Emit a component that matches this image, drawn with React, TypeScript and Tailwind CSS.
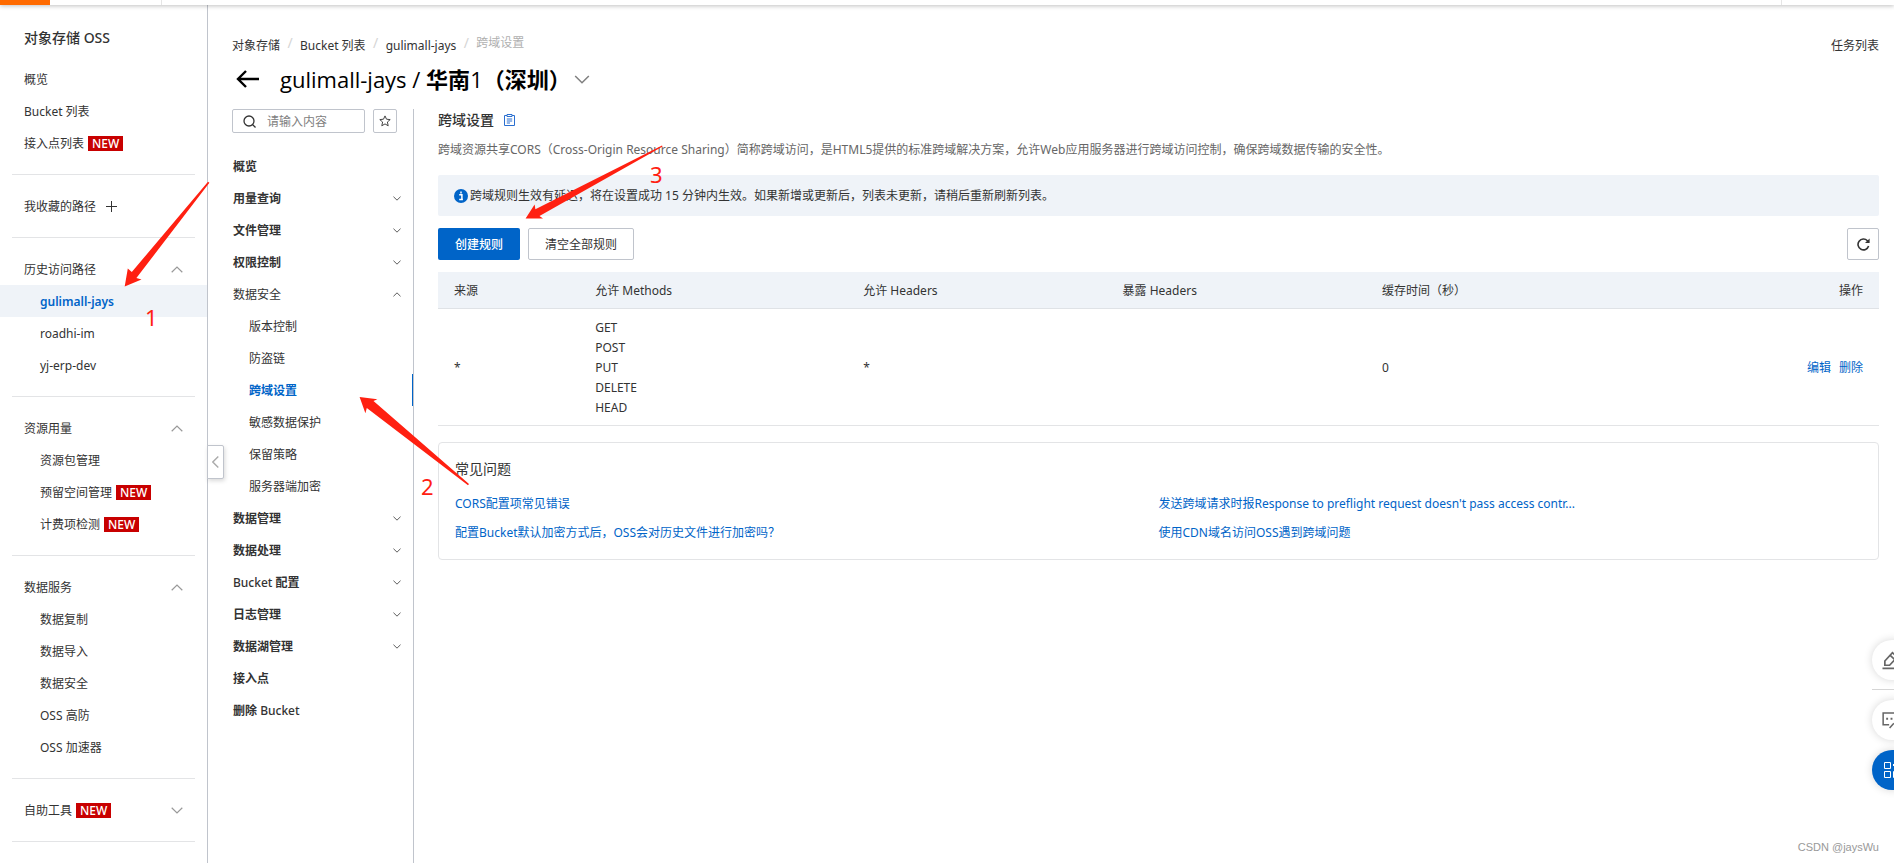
import type { ReactNode } from "react";

type IconProps = { className?: string };

function Chevron({ className = "" }: IconProps) {
  return (
    <svg viewBox="0 0 12 7" fill="none" stroke="currentColor" strokeWidth="1.2" className={className} aria-hidden="true">
      <path d="M0.7 0.8 6 6 11.3 0.8" />
    </svg>
  );
}

/* Chinese runs are set bold, Latin runs keep the surrounding weight. */
function MixedBold({ text }: { text: string }) {
  return (
    <span className="whitespace-pre">
      {text.split(/([\x20-\x7e]+)/).map((part, i) => (i % 2 ? part : <b key={i} className="font-bold">{part}</b>))}
    </span>
  );
}

function NewBadge() {
  return <span className="ml-1 bg-[#c80000] px-1 text-xs leading-[15px] font-medium text-white">NEW</span>;
}

function SideLink({ label, indent = false, active = false, badge = false }: { label: string; indent?: boolean; active?: boolean; badge?: boolean }) {
  return (
    <a
      href="#"
      className={`flex h-8 items-center pt-px ${indent ? "pl-10" : "pl-6"} ${active ? "bg-[#eff3f8] font-semibold text-[#0064c8]" : ""}`}
    >
      {label}
      {badge && <NewBadge />}
    </a>
  );
}

function SideGroup({ title, open = true, badge = false, children }: { title: string; open?: boolean; badge?: boolean; children?: ReactNode }) {
  return (
    <section className="pt-[15px]">
      <button type="button" className="flex h-8 w-full items-center pt-px pr-6 pl-6 text-left">
        {title}
        {badge && <NewBadge />}
        <Chevron className={`ml-auto h-[7px] w-3 text-[#999] ${open ? "rotate-180" : ""}`} />
      </button>
      {children}
      <div className="mx-3 mt-[15px] h-px bg-[#e3e4e6]" />
    </section>
  );
}

const navItems: { label: string; kind?: "leaf" | "open" | "sub" | "current" }[] = [
  { label: "概览", kind: "leaf" },
  { label: "用量查询" },
  { label: "文件管理" },
  { label: "权限控制" },
  { label: "数据安全", kind: "open" },
  { label: "版本控制", kind: "sub" },
  { label: "防盗链", kind: "sub" },
  { label: "跨域设置", kind: "current" },
  { label: "敏感数据保护", kind: "sub" },
  { label: "保留策略", kind: "sub" },
  { label: "服务器端加密", kind: "sub" },
  { label: "数据管理" },
  { label: "数据处理" },
  { label: "Bucket 配置" },
  { label: "日志管理" },
  { label: "数据湖管理" },
  { label: "接入点", kind: "leaf" },
  { label: "删除 Bucket", kind: "leaf" },
];

function BucketNav() {
  return (
    <nav className="mt-[17px]">
      {navItems.map(({ label, kind }) => {
        if (kind === "sub" || kind === "current") {
          return (
            <a
              key={label + kind}
              href="#"
              className={`flex h-8 items-center pt-px pl-[17px] ${kind === "current" ? "border-r border-[#0064c8] font-bold text-[#0064c8]" : ""}`}
            >
              {label}
            </a>
          );
        }
        if (kind === "leaf") {
          return (
            <a key={label} href="#" className="flex h-8 items-center pt-px pl-px font-medium">
              <MixedBold text={label} />
            </a>
          );
        }
        return (
          <button
            key={label}
            type="button"
            className="flex h-8 w-full items-center justify-between pt-px pr-3 pl-px font-medium"
          >
            {kind === "open" ? <span className="font-normal">{label}</span> : <MixedBold text={label} />}
            <Chevron className={`h-[5px] w-2 text-[#333] ${kind === "open" ? "rotate-180" : ""}`} />
          </button>
        );
      })}
    </nav>
  );
}

function Annotations() {
  return (
    <div className="pointer-events-none absolute top-0 left-0 text-[22px] leading-6 text-[#ff2011]" aria-hidden="true">
      <svg width="700" height="520" viewBox="0 0 700 520" fill="#ff2011">
        <path d="M124.7 286.4 127.8 268.6 131.8 272 208 181.8 209.4 182.8 136.4 278 141.5 279.5Z" />
        <path d="M359.6 397 377.4 399.3 373.5 401 469 484 468 485.2 366.8 408 365.4 413.2Z" />
        <path d="M525.6 218.6 534.6 204.4 535.4 209.3 662 145.4 662.6 146.6 539.5 216 543 218.6Z" />
      </svg>
      <span className="absolute top-[305px] left-[145px]">1</span>
      <span className="absolute top-[474px] left-[421px]">2</span>
      <span className="absolute top-[162px] left-[650px]">3</span>
    </div>
  );
}

function FloatingTools() {
  return (
    <div className="absolute top-[640px] right-0 w-[22px]">
      <div className="w-10">
        <button type="button" aria-label="反馈" className="flex size-10 items-center justify-center rounded-full bg-white text-[#666] shadow-[0_0_8px_rgba(0,0,0,0.16)]">
          <svg className="mr-px size-[19px]" viewBox="0 0 20 20" fill="none" stroke="currentColor" strokeWidth="1.8">
            <path d="M0.5 18.2H19.5M3 15V10.5L11 1.8 16 6.3 8 15ZM8.6 4.6 13.4 9" />
          </svg>
        </button>
        <div className="my-[9px] h-px bg-[#d5d5d5]" />
        <button type="button" aria-label="咨询" className="mt-[10px] flex size-10 items-center justify-center rounded-full bg-white text-[#666] shadow-[0_0_8px_rgba(0,0,0,0.16)]">
          <svg className="mr-px size-[19px]" viewBox="0 0 20 20" fill="none" stroke="currentColor" strokeWidth="1.6">
            <path d="M7.5 14.5H1.2V2H18.8V9M8 18 12.5 13" />
            <path d="M4.4 8.2H6.4M9 8.2H11M13.6 8.2H15.6" strokeWidth="2" />
          </svg>
        </button>
        <button type="button" aria-label="应用" className="mt-[10px] flex size-10 items-center justify-center rounded-full bg-[#0064c8] text-white shadow-[0_0_8px_rgba(0,0,0,0.16)]">
          <svg className="size-4" viewBox="0 0 16 16" fill="none" stroke="currentColor">
            <path d="M0.5 0.5H6.5V6.5H0.5ZM0.5 9.5H6.5V15.5H0.5ZM9.5 9.5H15.5V15.5H9.5ZM12.5 -0.5 16 3 12.5 6.5 9 3Z" />
          </svg>
        </button>
      </div>
    </div>
  );
}

export default function App() {
  return (
    <div className="relative flex h-screen min-h-[863px] flex-col overflow-hidden bg-white font-['Noto_Sans','Noto_Sans_CJK_SC',sans-serif] text-xs text-[#333]">
      <header className="relative z-10 flex h-[5px] shrink-0 bg-white shadow-[0_1px_4px_rgba(0,0,0,0.25)]">
        <div className="w-[50px] bg-[#ff6a00]" />
        <div className="ml-[111px] w-px bg-[#e5e5e5]" />
        <div className="mr-28 ml-auto w-px bg-[#e5e5e5]" />
      </header>

      <div className="flex flex-1">
        <aside className="relative w-52 shrink-0 border-r border-[#c0c4cc]">
          <h1 className="mt-[17px] mb-[9px] pl-6 text-sm leading-8 font-medium">
            对象存储 OSS
          </h1>
          <SideLink label="概览" />
          <SideLink label="Bucket 列表" />
          <SideLink label="接入点列表" badge />
          <div className="mx-3 mt-[15px] h-px bg-[#e3e4e6]" />
          <section className="pt-[15px]">
            <div className="flex h-8 items-center gap-[10px] pt-px pl-6">
              我收藏的路径
              <button type="button" aria-label="添加路径">
                <svg className="size-[11px]" viewBox="0 0 11 11" stroke="#333" aria-hidden="true">
                  <path d="M5.5 0V11M0 5.5H11" />
                </svg>
              </button>
            </div>
            <div className="mx-3 mt-[15px] h-px bg-[#e3e4e6]" />
          </section>
          <SideGroup title="历史访问路径">
            <SideLink label="gulimall-jays" indent active />
            <SideLink label="roadhi-im" indent />
            <SideLink label="yj-erp-dev" indent />
          </SideGroup>
          <SideGroup title="资源用量">
            <SideLink label="资源包管理" indent />
            <SideLink label="预留空间管理" indent badge />
            <SideLink label="计费项检测" indent badge />
          </SideGroup>
          <SideGroup title="数据服务">
            <SideLink label="数据复制" indent />
            <SideLink label="数据导入" indent />
            <SideLink label="数据安全" indent />
            <SideLink label="OSS 高防" indent />
            <SideLink label="OSS 加速器" indent />
          </SideGroup>
          <SideGroup title="自助工具" open={false} badge />
          <button
            type="button"
            aria-label="收起导航"
            className="absolute top-[440px] left-full z-10 flex h-[34px] w-[17px] items-center justify-center rounded-r-xs border border-[#c0c4cc] bg-white shadow-[1px_2px_4px_rgba(0,0,0,0.15)]"
          >
            <svg className="h-3 w-[7px]" viewBox="0 0 7 12" fill="none" stroke="#aaa" strokeWidth="1.4" aria-hidden="true">
              <path d="M6.3 0.6 0.8 6 6.3 11.4" />
            </svg>
          </button>
        </aside>

        <main className="flex min-w-0 flex-1 flex-col pr-[15px] pl-6">
          <div className="flex justify-between pt-[31px] leading-5">
            <ol className="flex">
              <li><a href="#">对象存储</a></li>
              <li className="-mt-[3px] w-5 text-center text-sm leading-5 text-[#d5d5d5]">/</li>
              <li><a href="#">Bucket 列表</a></li>
              <li className="-mt-[3px] w-5 text-center text-sm leading-5 text-[#d5d5d5]">/</li>
              <li><a href="#">gulimall-jays</a></li>
              <li className="-mt-[3px] w-5 text-center text-sm leading-5 text-[#d5d5d5]">/</li>
              <li className="-mt-[3px] text-[#b0b0b0]">跨域设置</li>
            </ol>
            <a href="#">任务列表</a>
          </div>

          <div className="mt-[7px] flex h-8 items-center pl-1 text-black">
            <button type="button" aria-label="返回">
              <svg className="h-[18px] w-6" viewBox="0 0 24 18" fill="none" stroke="currentColor" strokeWidth="2.4" aria-hidden="true">
                <path d="M23 9H2M10 1 2 9 10 17" />
              </svg>
            </button>
            <h2 className="ml-5 font-['Open_Sans','Noto_Sans_CJK_SC',sans-serif] text-[22px] leading-8">
              <MixedBold text="gulimall-jays / 华南1（深圳）" />
            </h2>
            <button type="button" aria-label="切换 Bucket" className="ml-[3px]">
              <Chevron className="h-[9px] w-4 text-[#808080]" />
            </button>
          </div>

          <div className="mt-[14px] flex flex-1">
            <div className="w-[182px] shrink-0 border-r border-[#c0c4cc]">
              <div className="flex gap-2">
                <label className="flex h-6 w-[133px] items-center rounded-xs border border-[#c0c4cc] pl-[10px]">
                  <svg className="size-[13px] shrink-0" viewBox="0 0 13 13" fill="none" stroke="#333" strokeWidth="1.3" aria-label="搜索">
                    <circle cx="6" cy="6" r="5" />
                    <path d="M9.5 9.5 12.5 12.5" />
                  </svg>
                  <input type="text" placeholder="请输入内容" className="ml-[11px] w-20 pt-px outline-none placeholder:text-[#808080]" />
                </label>
                <button type="button" aria-label="收藏" className="flex size-6 items-center justify-center rounded-xs border border-[#c0c4cc]">
                  <svg className="size-3" viewBox="0 0 12 12" fill="none" stroke="#444" aria-hidden="true">
                    <path d="M6 0.9 7.5 4.2 11.2 4.6 8.4 7 9.2 10.8 6 8.9 2.8 10.8 3.6 7 0.8 4.6 4.5 4.2Z" />
                  </svg>
                </button>
              </div>
              <BucketNav />
            </div>

            <div className="min-w-0 flex-1 pl-6">
              <div className="flex h-[22px] items-center gap-[10px]">
                <h3 className="text-sm font-medium">跨域设置</h3>
                <a href="#" aria-label="文档">
                  <svg className="h-3 w-[11px]" viewBox="0 0 11 12" fill="none" stroke="#2a6fd0" aria-hidden="true">
                    <path d="M3 1.5H0.5V11.5H10.5V1.5H8M3 0.5H8V2.5H3ZM2.8 5H8.2M2.8 7H8.2M2.8 9H6" />
                  </svg>
                </a>
              </div>
              <p className="mt-[9px] leading-5 text-[#666]">
                跨域资源共享CORS（Cross-Origin Resource Sharing）简称跨域访问，是HTML5提供的标准跨域解决方案，允许Web应用服务器进行跨域访问控制，确保跨域数据传输的安全性。
              </p>
              <div className="mt-[15px] flex h-[41px] items-center gap-0.5 rounded-xs bg-[#eff3f8] px-4">
                <svg className="size-[14px]" viewBox="0 0 14 14" aria-hidden="true">
                  <circle cx="7" cy="7" r="7" fill="#0064c8" />
                  <path d="M5.2 5.8H7.9V10.5M5.2 10.6H8.9M7 2.6V4.4" stroke="#fff" strokeWidth="1.5" fill="none" />
                </svg>
                <span>跨域规则生效有延迟，将在设置成功 15 分钟内生效。如果新增或更新后，列表未更新，请稍后重新刷新列表。</span>
              </div>

              <div className="mt-3 flex gap-2">
                <button type="button" className="h-8 rounded-xs bg-[#0064c8] px-[17px] pt-px font-medium text-white">创建规则</button>
                <button type="button" className="h-8 rounded-xs border border-[#c0c4cc] px-4 pt-px">清空全部规则</button>
                <button type="button" aria-label="刷新" className="ml-auto flex size-8 items-center justify-center rounded-xs border border-[#c0c4cc]">
                  <svg className="size-[13px]" viewBox="0 0 13 13" fill="none" stroke="#333" strokeWidth="1.6" aria-hidden="true">
                    <path d="M11.6 8A5.4 5.4 0 1 1 10.4 2.8L11.4 3.9" />
                    <path d="M12.6 0.4V5H8Z" fill="#333" stroke="none" />
                  </svg>
                </button>
              </div>

              <table className="mt-3 w-full table-fixed border-collapse text-left">
                <thead className="bg-[#eff3f8]">
                  <tr className="h-[36px] border-b border-[#dfe2e6]">
                    <th className="w-[9.8%] px-4 pt-0.5 font-normal">来源</th>
                    <th className="w-[18.6%] px-4 pt-0.5 font-normal">允许 Methods</th>
                    <th className="w-[18%] px-4 pt-0.5 font-normal">允许 Headers</th>
                    <th className="w-[18%] px-4 pt-0.5 font-normal">暴露 Headers</th>
                    <th className="px-4 pt-0.5 font-normal">缓存时间（秒）</th>
                    <th className="px-4 pt-0.5 text-right font-normal">操作</th>
                  </tr>
                </thead>
                <tbody>
                  <tr className="border-b border-[#e3e4e6] leading-5">
                    <td className="px-4 pt-0.5">*</td>
                    <td className="px-4 pt-[9px] pb-[7px]">
                      <div>GET</div>
                      <div>POST</div>
                      <div>PUT</div>
                      <div>DELETE</div>
                      <div>HEAD</div>
                    </td>
                    <td className="px-4 pt-0.5">*</td>
                    <td className="px-4 pt-0.5"></td>
                    <td className="px-4 pt-0.5">0</td>
                    <td className="px-4 pt-0.5">
                      <div className="flex justify-end gap-2 text-[#0064c8]">
                        <a href="#">编辑</a>
                        <a href="#">删除</a>
                      </div>
                    </td>
                  </tr>
                </tbody>
              </table>

              <section className="mt-4 rounded border border-[#e3e4e6] px-4 pt-[14px] pb-3">
                <h4 className="text-sm leading-6">常见问题</h4>
                <div className="mt-2 grid grid-cols-2 leading-[29px] text-[#0064c8]">
                  <a href="#">CORS配置项常见错误</a>
                  <a href="#">发送跨域请求时报Response to preflight request doesn't pass access contr...</a>
                  <a href="#">配置Bucket默认加密方式后，OSS会对历史文件进行加密吗？</a>
                  <a href="#">使用CDN域名访问OSS遇到跨域问题</a>
                </div>
              </section>
            </div>
          </div>
        </main>
      </div>

      <FloatingTools />
      <Annotations />
      <p className="absolute right-[15px] bottom-2 font-['Liberation_Sans',sans-serif] text-[11px] text-[#999]">CSDN @jaysWu</p>
    </div>
  );
}
